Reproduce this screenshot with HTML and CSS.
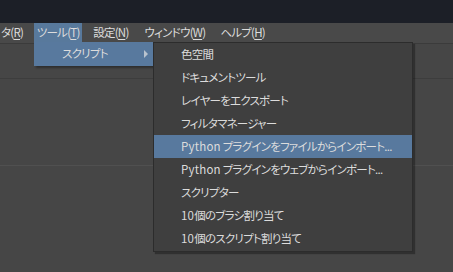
FILE: index.html
```html
<!DOCTYPE html>
<html lang="ja">
<head>
  <meta charset="UTF-8" />
  <title>ツール メニュー</title>
  <link rel="stylesheet" href="styles.css">
</head>
<body>
  <div class="titlebar"></div>

  <div class="menubar">
    <span class="menu-item cut">タ(<u>R</u>)</span>
    <span class="menu-item active">ツール(<u>T</u>)</span>
    <span class="menu-item">設定(<u>N</u>)</span>
    <span class="menu-item">ウィンドウ(<u>W</u>)</span>
    <span class="menu-item">ヘルプ(<u>H</u>)</span>
  </div>

  <div class="workspace">
    <div class="pane pane-top"></div>
    <div class="pane pane-mid"></div>
    <div class="pane pane-bottom"></div>
  </div>

  <!-- first level dropdown -->
  <div class="dropdown">
    <div class="drop-row selected">
      <span>スクリプト</span>
      <span class="arrow"></span>
    </div>
  </div>

  <!-- script submenu -->
  <div class="submenu">
    <div class="sub-row">色空間</div>
    <div class="sub-row">ドキュメントツール</div>
    <div class="sub-row">レイヤーをエクスポート</div>
    <div class="sub-row">フィルタマネージャー</div>
    <div class="sub-row selected"><span class="lat">Python</span> プラグインをファイルからインポート...</div>
    <div class="sub-row"><span class="lat">Python</span> プラグインをウェブからインポート...</div>
    <div class="sub-row">スクリプター</div>
    <div class="sub-row"><span class="lat">10</span>個のブラシ割り当て</div>
    <div class="sub-row"><span class="lat">10</span>個のスクリプト割り当て</div>
  </div>
</body>
</html>
```

FILE: styles.css
```css
* {
  box-sizing: border-box;
}

body {
  margin: 0;
  width: 453px;
  height: 272px;
  overflow: hidden;
  background-color: #474747;
  font-family: "Noto Sans CJK JP", "Noto Sans", sans-serif;
  font-size: 11.5px;
  font-feature-settings: "palt";
  letter-spacing: -0.75px;
  color: #dcdcdc;
  position: relative;
}

.titlebar {
  height: 23px;
  background-color: #1c1f27;
}

.menubar {
  height: 20px;
  background-color: #494949;
  display: flex;
  align-items: stretch;
}

.menu-item {
  display: flex;
  align-items: center;
  padding: 0 0 1px 0;
  white-space: nowrap;
  line-height: 1;
}

.menu-item.cut {
  margin-left: 1px;
  margin-right: 11px;
}

.menu-item.active {
  background-color: #58799c;
  justify-content: center;
  width: 48px;
  margin-right: 11px;
}

.menu-item:nth-child(3) {
  margin-right: 16px;
}

.menu-item:nth-child(4) {
  margin-right: 15px;
}

.menu-item u {
  text-decoration-thickness: 1px;
  text-underline-offset: 2px;
}

.workspace {
  display: flex;
  flex-direction: column;
  height: 229px;
  border-top: 1px solid #3b3b3b;
}

.pane {
  background-color: #464646;
}

.pane-top {
  height: 35px;
  border-bottom: 1px solid #3d3d3d;
}

.pane-mid {
  height: 87px;
  border-bottom: 1px solid #505050;
}

.pane-bottom {
  flex: 1;
}

.dropdown {
  position: absolute;
  left: 34px;
  top: 42px;
  width: 119px;
  box-shadow: 2px 2px 2px rgba(0, 0, 0, 0.35);
}

.drop-row {
  height: 24px;
  display: flex;
  align-items: center;
  justify-content: space-between;
  padding: 0 5px 2px 28px;
}

.selected {
  background-color: #58799e;
}

.arrow {
  width: 0;
  height: 0;
  border-top: 4px solid transparent;
  border-bottom: 4px solid transparent;
  border-left: 4px solid #b9c3ce;
  margin-top: 2px;
}

.submenu {
  position: absolute;
  left: 153px;
  top: 42px;
  width: 260px;
  background-color: #3f3f3f;
  border: 1px solid #2c2c2c;
  box-shadow: 2px 2px 1px rgba(0, 0, 0, 0.3);
}

.sub-row {
  height: 23.1px;
  display: flex;
  align-items: center;
  padding: 0 0 2px 27px;
  white-space: pre;
}

.lat {
  letter-spacing: 0.2px;
}
```
